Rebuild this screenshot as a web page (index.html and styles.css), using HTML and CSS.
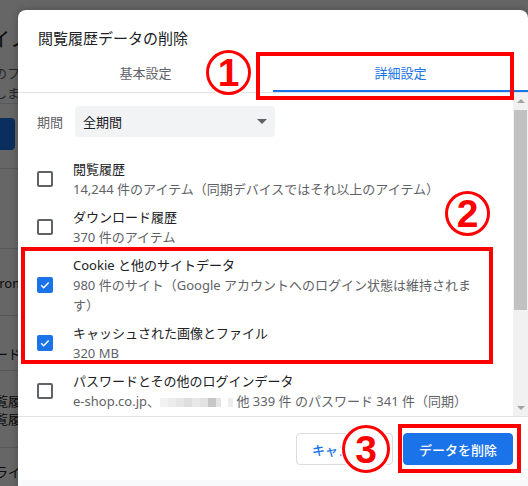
FILE: index.html
```html
<!DOCTYPE html>
<html lang="ja">
<head>
  <meta charset="UTF-8">
  <title>閲覧履歴データの削除</title>
  <link rel="stylesheet" href="styles.css">
</head>
<body>

<!-- page behind the dialog -->
<div class="page">
  <h1 class="page-title">イノベーション設定</h1>
  <p class="page-desc">のフォルダを確認<br>しましょう</p>
  <div class="page-sec sec-a"><div class="page-btn"></div></div>
  <div class="page-sec sec-b"></div>
  <div class="page-sec sec-c"><p class="t-c">Chrome にログイン</p></div>
  <div class="page-sec sec-d"><p class="t-d">パスワードとパスキー</p></div>
  <div class="page-sec sec-e"><p class="t-e">閲覧履歴<br>閲覧履歴データ</p></div>
  <div class="page-sec sec-f"><p class="t-f">ライブラリ</p></div>
</div>
<div class="scrim"></div>

<div class="dialog">
  <div class="title">閲覧履歴データの削除</div>

  <div class="tabs">
    <div class="tab">基本設定</div>
    <div class="tab active">詳細設定</div>
  </div>

  <div class="main">
    <div class="list">
      <div class="period">
        <span class="period-label">期間</span>
        <div class="select">
          <span>全期間</span>
          <span class="select-arrow"></span>
        </div>
      </div>

      <div class="item">
        <span class="cb"></span>
        <div>
          <div class="item-title">閲覧履歴</div>
          <div class="item-sub">14,244 件のアイテム（同期デバイスではそれ以上のアイテム）</div>
        </div>
      </div>

      <div class="item">
        <span class="cb"></span>
        <div>
          <div class="item-title">ダウンロード履歴</div>
          <div class="item-sub">370 件のアイテム</div>
        </div>
      </div>

      <div class="item">
        <span class="cb on"><svg viewBox="0 0 16 16"><path d="M4.2 8.3l2.5 2.4 5-5.2"/></svg></span>
        <div>
          <div class="item-title">Cookie と他のサイトデータ</div>
          <div class="item-sub">980 件のサイト（Google アカウントへのログイン状態は維持されま<br>す）</div>
        </div>
      </div>

      <div class="item">
        <span class="cb on"><svg viewBox="0 0 16 16"><path d="M4.2 8.3l2.5 2.4 5-5.2"/></svg></span>
        <div>
          <div class="item-title">キャッシュされた画像とファイル</div>
          <div class="item-sub">320 MB</div>
        </div>
      </div>

      <div class="item">
        <span class="cb"></span>
        <div>
          <div class="item-title">パスワードとその他のログインデータ</div>
          <div class="item-sub">e-shop.co.jp、<span class="mosaic"><i class="m1"></i><i class="m2"></i><i class="m3"></i><i class="m4"></i><i class="m5"></i><i class="m6"></i><i class="m7"></i><i class="m8"></i><i class="m9"></i><i class="m10"></i></span> 他 339 件 のパスワード 341 件（同期）</div>
        </div>
      </div>
    </div>

    <div class="scrollbar">
      <div class="sb-btn"><span class="sb-up"></span></div>
      <div class="sb-thumb"></div>
      <div class="sb-space"></div>
      <div class="sb-btn"><span class="sb-down"></span></div>
    </div>
  </div>

  <div class="actions">
    <button class="btn">キャンセル</button>
    <button class="btn primary">データを削除</button>
  </div>
  <div class="footer"></div>
</div>

<!-- annotations -->
<div class="mark-box box-1"></div>
<div class="mark-box box-2"></div>
<div class="mark-box box-3"></div>
<div class="num num-1">1</div>
<div class="num num-2">2</div>
<div class="num num-3">3</div>

</body>
</html>
```

FILE: styles.css
```css
body {
  margin: 0;
  width: 528px;
  height: 486px;
  overflow: hidden;
  position: relative;
  background: #fff;
  font-family: "Noto Sans", "Noto Sans CJK JP", sans-serif;
  color: #202124;
}

/* page behind */
.page {
  margin-left: -10px;
  padding-top: 28px;
  white-space: nowrap;
}
.page-title {
  margin: 0;
  font-size: 20px;
  line-height: 24px;
  font-weight: 400;
}
.page-desc {
  margin: 11px 0 0 4px;
  font-size: 13px;
  line-height: 20px;
  color: #5f6368;
}
.page-sec {
  border-top: 1px solid #dadce0;
  font-size: 13px;
  line-height: 20px;
}
.page-sec p {
  margin: 0;
}
.sec-a {
  height: 50px;
  padding-top: 14px;
}
.page-btn {
  width: 25px;
  height: 32px;
  border-radius: 0 4px 4px 0;
  background: #1a73e8;
}
.sec-b { height: 79px; }
.sec-c { height: 42px; padding-top: 24px; }
.sec-d { height: 26px; padding-top: 28px; }
.sec-e { height: 55px; padding-top: 21px; line-height: 18px; }
.sec-f { height: 40px; padding-top: 14px; }
.t-c { margin-left: -7px !important; }
.t-d { margin-left: -34px !important; }
.t-e { margin-left: -8px !important; }
.t-f { margin-left: 5px !important; }

.scrim {
  position: absolute;
  left: 0;
  top: 0;
  right: 0;
  bottom: 0;
  background: rgba(0, 0, 0, 0.6);
}

/* dialog */
.dialog {
  position: absolute;
  left: 18px;
  top: 10px;
  width: 510px;
  height: 490px;
  background: #fff;
  border-radius: 8px;
  box-shadow: 0 0 8px rgba(0, 0, 0, 0.25);
  display: flex;
  flex-direction: column;
  overflow: hidden;
}
.title {
  padding: 18px 20px 0;
  font-size: 15px;
  line-height: 20px;
}
.tabs {
  display: flex;
  border-bottom: 1px solid #e0e0e0;
}
.tab {
  flex: 1;
  text-align: center;
  padding: 16px 0 8px;
  font-size: 13px;
  line-height: 18px;
  color: #5f6368;
  border-bottom: 2px solid transparent;
}
.tab.active {
  color: #1a73e8;
  border-bottom-color: #1a73e8;
}

.main {
  display: flex;
  height: 323px;
  border-bottom: 1px solid #e0e0e0;
}
.list {
  flex: 1;
  overflow: hidden;
  padding-left: 19px;
  font-size: 13px;
}
.period {
  display: flex;
  align-items: center;
  height: 31px;
  margin: 13px 0 18px;
}
.period-label {
  width: 38px;
  color: #5f6368;
}
.select {
  width: 200px;
  height: 31px;
  box-sizing: border-box;
  padding: 0 8px;
  background: #f1f3f4;
  border-radius: 4px;
  display: flex;
  align-items: center;
  justify-content: space-between;
}
.select-arrow {
  border-left: 5px solid transparent;
  border-right: 5px solid transparent;
  border-top: 5px solid #5f6368;
}

.item {
  display: flex;
  align-items: center;
  gap: 20px;
  padding: 4px 0;
}
.cb {
  flex: none;
  width: 16px;
  height: 16px;
  box-sizing: border-box;
  border: 2px solid #5f6368;
  border-radius: 2px;
  display: flex;
}
.cb.on {
  background: #1a73e8;
  border-color: #1a73e8;
}
.cb svg {
  width: 16px;
  height: 16px;
  margin: -2px;
  fill: none;
  stroke: #fff;
  stroke-width: 1.5;
}
.item-title {
  line-height: 20px;
  white-space: nowrap;
}
.item-sub {
  line-height: 20px;
  color: #5f6368;
  white-space: nowrap;
}
.mosaic {
  display: inline-flex;
  vertical-align: -1px;
}
.mosaic i {
  width: 8px;
  height: 9px;
}
.m1 { background: #f2f2f2; }
.m2 { background: #ececec; }
.m3 { background: #e6e6e6; }
.m4 { background: #dedede; }
.m5 { background: #e8e8e8; }
.m6 { background: #e2e2e2; }
.m7 { background: #c6c6c6; }
.m8 { background: #e4e4e4; width: 5px !important; }
.m9 { background: #fff; width: 7px !important; }
.m10 { background: #ededed; width: 5px !important; }

.scrollbar {
  width: 15px;
  background: #f1f1f1;
  display: flex;
  flex-direction: column;
}
.sb-btn {
  height: 16px;
  display: flex;
  align-items: center;
  justify-content: center;
}
.sb-up {
  border-left: 4px solid transparent;
  border-right: 4px solid transparent;
  border-bottom: 4px solid #a3a3a3;
}
.sb-down {
  border-left: 4px solid transparent;
  border-right: 4px solid transparent;
  border-top: 4px solid #a3a3a3;
}
.sb-thumb {
  height: 200px;
  margin: 1px 1px 0;
  background: #c1c1c1;
}
.sb-space {
  flex: 1;
}

.actions {
  display: flex;
  justify-content: flex-end;
  gap: 10px;
  padding: 16px 15px 15px;
}
.btn {
  height: 32px;
  padding: 0 15px;
  box-sizing: border-box;
  border: 1px solid #dadce0;
  border-radius: 4px;
  background: #fff;
  color: #1a73e8;
  font-family: "Noto Sans", "Noto Sans CJK JP", sans-serif;
  font-size: 13px;
  font-weight: 500;
}
.btn.primary {
  background: #1a73e8;
  border-color: #1a73e8;
  color: #fff;
}
.footer {
  flex: 1;
  background: #f8f9fa;
}

/* red annotations */
.mark-box {
  position: absolute;
  box-sizing: border-box;
  border: 4px solid #f00;
}
.box-1 { left: 256px; top: 52px; width: 258px; height: 48px; }
.box-2 { left: 21px; top: 247px; width: 472px; height: 117px; }
.box-3 { left: 398px; top: 424px; width: 123px; height: 49px; }

.num {
  position: absolute;
  width: 45px;
  height: 45px;
  box-sizing: border-box;
  border: 3.5px solid #f00;
  border-radius: 50%;
  background: #fff;
  box-shadow: 0 0 0 1.5px #fff;
  display: flex;
  align-items: center;
  justify-content: center;
  color: #f00;
  font-family: "Liberation Sans", sans-serif;
  font-weight: bold;
  font-size: 39px;
  line-height: 1;
}
.num-1 { left: 206px; top: 50px; }
.num-2 { left: 445px; top: 191px; }
.num-3 { left: 342px; top: 425px; width: 48px; height: 48px; }
```
